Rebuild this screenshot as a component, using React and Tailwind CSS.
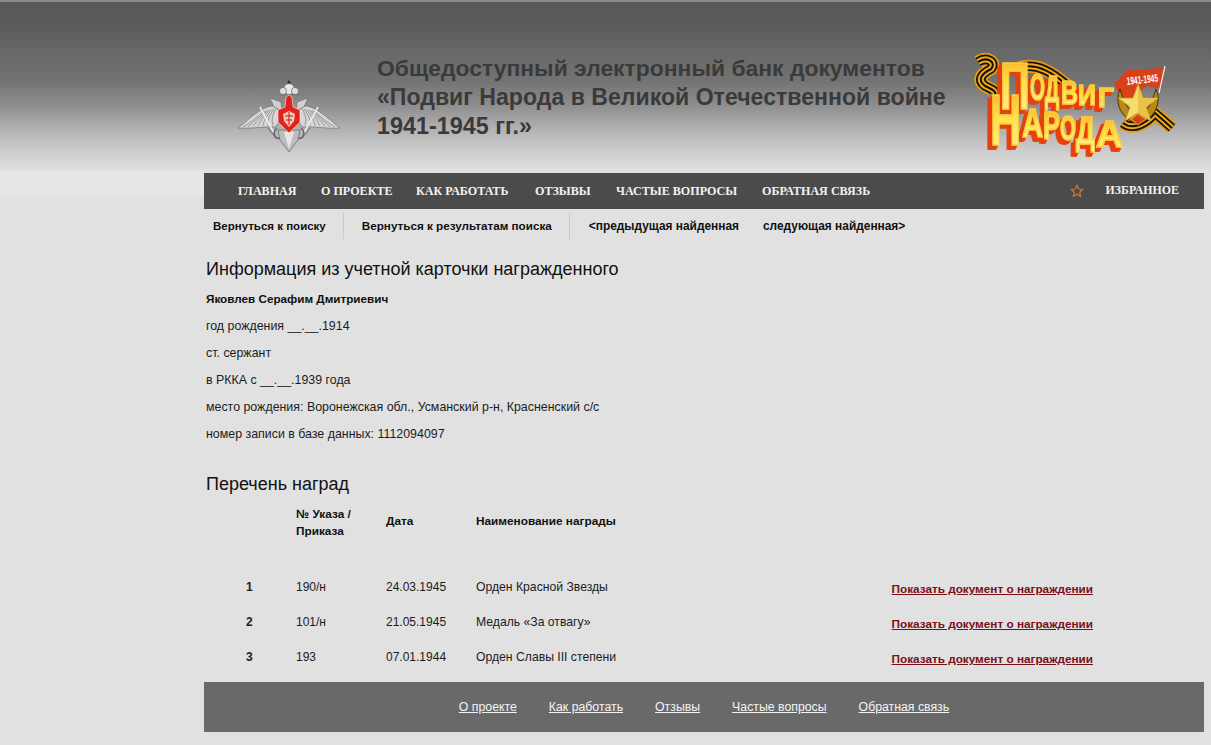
const navItems = [
  ['ГЛАВНАЯ', 'w-[83px]'],
  ['О ПРОЕКТЕ', 'w-[95px]'],
  ['КАК РАБОТАТЬ', 'w-[119px]'],
  ['ОТЗЫВЫ', 'w-[81px]'],
  ['ЧАСТЫЕ ВОПРОСЫ', 'w-[146px]'],
  ['ОБРАТНАЯ СВЯЗЬ', ''],
];

const info = [
  'год рождения __.__.1914',
  'ст. сержант',
  'в РККА с __.__.1939 года',
  'место рождения: Воронежская обл., Усманский р-н, Красненский с/с',
  'номер записи в базе данных: 1112094097',
];

const awards = [
  ['1', '190/н', '24.03.1945', 'Орден Красной Звезды'],
  ['2', '101/н', '21.05.1945', 'Медаль «За отвагу»'],
  ['3', '193', '07.01.1944', 'Орден Славы III степени'],
];

const footerLinks = ['О проекте', 'Как работать', 'Отзывы', 'Частые вопросы', 'Обратная связь'];

// герб: крылья, щит, корона
function Emblem() {
  const feathers = [0, 1, 2, 3, 4, 5, 6];
  return (
    <svg width="102" height="72" viewBox="0 0 102 72" className="shrink-0">
      {[false, true].map((flip) => (
        <g key={String(flip)} transform={flip ? 'translate(102 0) scale(-1 1)' : undefined}>
          <path d="M0 48 C10 40 22 28 33 26 C40 26 43 32 42 40 L38 47 C28 46 14 49 0 48Z" fill="#d6d6d6" stroke="#6f6f6f" strokeWidth="0.7" />
          {feathers.map((i) => (
            <path key={i} d={`M${5 + i * 5} ${47 - i * 0.3} C${14 + i * 3} ${42 - i} ${20 + i * 3} ${36 - i} ${26 + i * 2} ${31 - i * 0.4}`} fill="none" stroke="#7a7a7a" strokeWidth="0.7" />
          ))}
          <path d="M32 18 L43 22 L44 31 L36 27Z" fill="#cfcfcf" stroke="#666" strokeWidth="0.6" />
          <path d="M22 27 L36 53" stroke="#ececec" strokeWidth="1.6" />
          <path d="M30 48 L38 58" stroke="#777" strokeWidth="1.2" />
          <path d="M39 48 C34 52 36 60 43 58" fill="none" stroke="#6a6a6a" strokeWidth="1.6" />
        </g>
      ))}
      <path d="M40 50 L62 50 L60 60 L51 72 L42 60Z" fill="#bcbcbc" stroke="#666" strokeWidth="0.7" />
      <path d="M46 52 L51 69 L56 52Z" fill="#e6e6e6" />
      <circle cx="51" cy="9" r="5.5" fill="#e8e8e8" stroke="#666" strokeWidth="0.8" />
      <circle cx="45" cy="11" r="3.6" fill="#ddd" stroke="#666" strokeWidth="0.7" />
      <circle cx="57" cy="11" r="3.6" fill="#ddd" stroke="#666" strokeWidth="0.7" />
      <circle cx="51" cy="2" r="1.6" fill="#333" />
      <path d="M41 15 L61 15" stroke="#777" strokeWidth="0.8" />
      <path d="M40 30 L47 27 L48 17 L51 15 L54 17 L55 27 L62 30 L62 42 L51 53 L40 42Z" fill="#e2231a" stroke="#fbeaea" strokeWidth="0.6" />
      <path d="M51 31 L57 34 L56 41 L51 47 L46 41 L45 34Z" fill="#f6c9b8" />
      <path d="M47 36 L55 36 M48 40 L54 40 M51 32 L51 45" stroke="#c1170f" strokeWidth="1" />
    </svg>
  );
}

function Ribbon({ d }) {
  return (
    <g fill="none">
      <path d={d} stroke="#e99a12" strokeWidth="13" />
      <path d={d} stroke="#15120c" strokeWidth="9.5" />
      <path d={d} stroke="#f0a818" strokeWidth="6" />
      <path d={d} stroke="#15120c" strokeWidth="2" />
    </g>
  );
}

// буква, базовая линия, кегль, сжатие по горизонтали
const logoLetters = [
  ['П', 25, 56, 66, 0.63],
  ['О', 55, 47, 37, 0.52],
  ['Д', 70, 49, 36, 0.55],
  ['В', 86, 51, 34, 0.69],
  ['И', 103, 52, 30, 0.83],
  ['Г', 123, 54, 28, 1],
  ['Н', 15, 92, 72, 0.6],
  ['А', 47, 84, 40, 0.73],
  ['Р', 68, 86, 38, 0.67],
  ['О', 85, 87, 36, 0.57],
  ['Д', 101, 91, 38, 0.7],
  ['А', 121, 94, 36, 1.04],
];

// логотип «Подвиг Народа»
function ProjectLogo() {
  return (
    <svg width="204" height="100" viewBox="0 0 204 100" className="shrink-0 overflow-visible">
      <defs>
        <linearGradient id="gold" x1="0" y1="0" x2="0" y2="1">
          <stop offset="0" stopColor="#f9a51a" />
          <stop offset="0.45" stopColor="#ffe14a" />
          <stop offset="1" stopColor="#fff3a0" />
        </linearGradient>
        <filter id="extrude" x="-30%" y="-30%" width="170%" height="170%">
          <feFlood floodColor="#e5400f" result="red" />
          <feOffset in="SourceAlpha" dx="-2" dy="2" result="a1" />
          <feOffset in="SourceAlpha" dx="-3.5" dy="3.5" result="a2" />
          <feOffset in="SourceAlpha" dx="-5" dy="4" result="a3" />
          <feMerge result="alpha">
            <feMergeNode in="a1" />
            <feMergeNode in="a2" />
            <feMergeNode in="a3" />
          </feMerge>
          <feComposite in="red" in2="alpha" operator="in" result="side" />
          <feMerge>
            <feMergeNode in="side" />
            <feMergeNode in="SourceGraphic" />
          </feMerge>
        </filter>
      </defs>
      <Ribbon d="M3 9 C12 3 22 9 16 16 C6 21 2 27 10 33 C16 36 22 38 20 42" />
      <Ribbon d="M44 15 C62 9 78 20 93 33" />
      <Ribbon d="M148 70 C158 78 172 70 180 60 L197 75" />
      <g filter="url(#extrude)" fontFamily="'Liberation Sans', sans-serif" fontWeight="700" fill="url(#gold)" stroke="#ffcf3a" strokeWidth="1.6">
        {logoLetters.map(([ch, x, y, size, sx], i) => (
          <text key={i} transform={`translate(${x} ${y}) scale(${sx} 1)`} fontSize={size}>{ch}</text>
        ))}
      </g>
      <path d="M139 31 L152 17 L189 15 L186 36 L172 33 L150 50Z" fill="#d8401a" />
      <path d="M190 13 L184 40" stroke="#eee" strokeWidth="1.2" />
      <text transform="translate(152 32) rotate(-6) scale(0.6 1)" fontSize="11" fontWeight="700" fill="#fff" fontFamily="'Liberation Sans', sans-serif">1941-1945</text>
      <path d="M145 36 C139 50 146 66 163 71 C180 66 187 50 181 36 C177 50 172 60 163 62 C154 60 149 50 145 36Z" fill="#b98a12" stroke="#2b2206" strokeWidth="0.8" />
      <path d="M163 31 L168 45 L183 45 L171 54 L176 68 L163 60 L150 68 L155 54 L143 45 L158 45Z" fill="#f6dc6a" stroke="#c8921a" strokeWidth="0.8" />
      <path d="M163 31 L163 60 L176 68 L171 54 L183 45 L168 45Z" fill="#e9c24a" />
      <path d="M156 66 L163 61 L171 66 L163 72Z" fill="#d8401a" stroke="#f2c14a" strokeWidth="0.8" />
    </svg>
  );
}

function Title() {
  return (
    <h1 className="ml-[37px] mt-[1px] whitespace-nowrap text-[23.1px] leading-[29px] font-bold text-[#3a3a3a]">
      <span className="text-[22.9px]">Общедоступный электронный банк документов</span>
      <br />
      «Подвиг Народа в Великой Отечественной войне
      <br />
      <span className="text-[23.4px]">1941-1945 гг.»</span>
    </h1>
  );
}

export default function App() {
  return (
    <div className="relative min-h-[745px] overflow-hidden bg-[#e1e1e1] font-['Liberation_Sans',Arial,sans-serif] text-[12.4px] text-[#1c1c1c]">
      {/* светлая полоса слева от меню */}
      <div className="absolute left-0 top-[170px] h-[26px] w-[204px] bg-[#e6e6e6]" />

      <header className="relative h-[170px] border-t-2 border-[#8a8a8a] bg-[repeating-linear-gradient(to_bottom,rgba(255,255,255,0.025)_0px,rgba(255,255,255,0.025)_1px,transparent_1px,transparent_2px),linear-gradient(to_bottom,#575757_0px,#575757_18px,#646464_45px,#727272_80px,#8f8f8f_105px,#aeaeae_125px,#cbcbcb_148px,#e1e1e1_170px)]">
        <div className="ml-[238px] flex items-start pt-[51px]">
          <div className="mt-[27px]">
            <Emblem />
          </div>
          <Title />
          <div className="ml-[29px]">
            <ProjectLogo />
          </div>
        </div>
      </header>

      <main className="relative ml-[204px] mt-[3px] w-[1000px]">
        <nav className="flex h-[36px] items-center bg-[#4b4b4b] pl-[34px] pr-[25px] font-['Liberation_Serif',serif] text-[12.1px] font-bold text-[#f2f2f2]">
          {navItems.map(([label, width]) => (
            <a key={label} className={`whitespace-nowrap ${width}`}>{label}</a>
          ))}
          <svg width="14" height="14" viewBox="0 0 24 24" fill="none" stroke="#d9763a" strokeWidth="2" className="ml-auto mr-[22px]">
            <path d="M12 2.5l2.9 6.2 6.8.8-5 4.6 1.3 6.7-6-3.4-6 3.4 1.3-6.7-5-4.6 6.8-.8z" />
          </svg>
          <a className="text-[11.9px]">ИЗБРАННОЕ</a>
        </nav>

        <div className="flex h-[34px] items-baseline pl-[9px] pt-[10px] font-bold leading-[14px] text-[#111]">
          <a className="text-[11.5px]">Вернуться к поиску</a>
          <span className="ml-[17px] mr-[18px] mt-[-6px] h-[26px] w-px self-start bg-[#c9c9c9]" />
          <a className="text-[11.7px]">Вернуться к результатам поиска</a>
          <span className="ml-[17px] mr-[19px] mt-[-6px] h-[26px] w-px self-start bg-[#c9c9c9]" />
          <a className="text-[11.9px]">&lt;предыдущая найденная</a>
          <a className="ml-[24px] text-[11.9px]">следующая найденная&gt;</a>
        </div>

        <section className="pl-[2px] pt-[17px]">
          <h2 className="text-[18px] leading-[18px] text-[#111]">Информация из учетной карточки награжденного</h2>
          <p className="mt-[14px] text-[11.7px] font-bold leading-[14px] text-[#111]">Яковлев Серафим Дмитриевич</p>
          {info.map((line) => (
            <p key={line} className="mt-[13px] leading-[14px]">{line}</p>
          ))}
        </section>

        <section className="pt-[34px]">
          <h2 className="pl-[2px] text-[18px] leading-[18px] text-[#111]">Перечень наград</h2>
          <div className="mt-[13px] grid grid-cols-[92px_90px_90px_1fr] text-[11.8px] font-bold leading-[17px] text-[#111]">
            <span />
            <span>№ Указа /<br />Приказа</span>
            <span className="mb-[4px] self-center">Дата</span>
            <span className="mb-[4px] self-center">Наименование награды</span>
          </div>
          <div className="mt-[40px]">
            {awards.map(([num, order, date, name]) => (
              <div key={num} className="grid h-[35px] grid-cols-[92px_90px_90px_1fr_auto] pr-[111px] text-[12.2px] leading-[14px]">
                <b className="pl-[42px] text-[12px]">{num}</b>
                <span className="text-[12px]">{order}</span>
                <span className="text-[12px]">{date}</span>
                <span>{name}</span>
                <a className="mt-[2px] text-[11.75px] font-bold text-[#7a1018] underline">Показать документ о награждении</a>
              </div>
            ))}
          </div>
        </section>

        <footer className="mt-[-3px] flex h-[50px] items-center justify-center gap-[32px] bg-[#696969] text-[12.3px] text-[#f4f4f4]">
          {footerLinks.map((link) => (
            <a key={link} className="underline">{link}</a>
          ))}
        </footer>
      </main>
    </div>
  );
}
